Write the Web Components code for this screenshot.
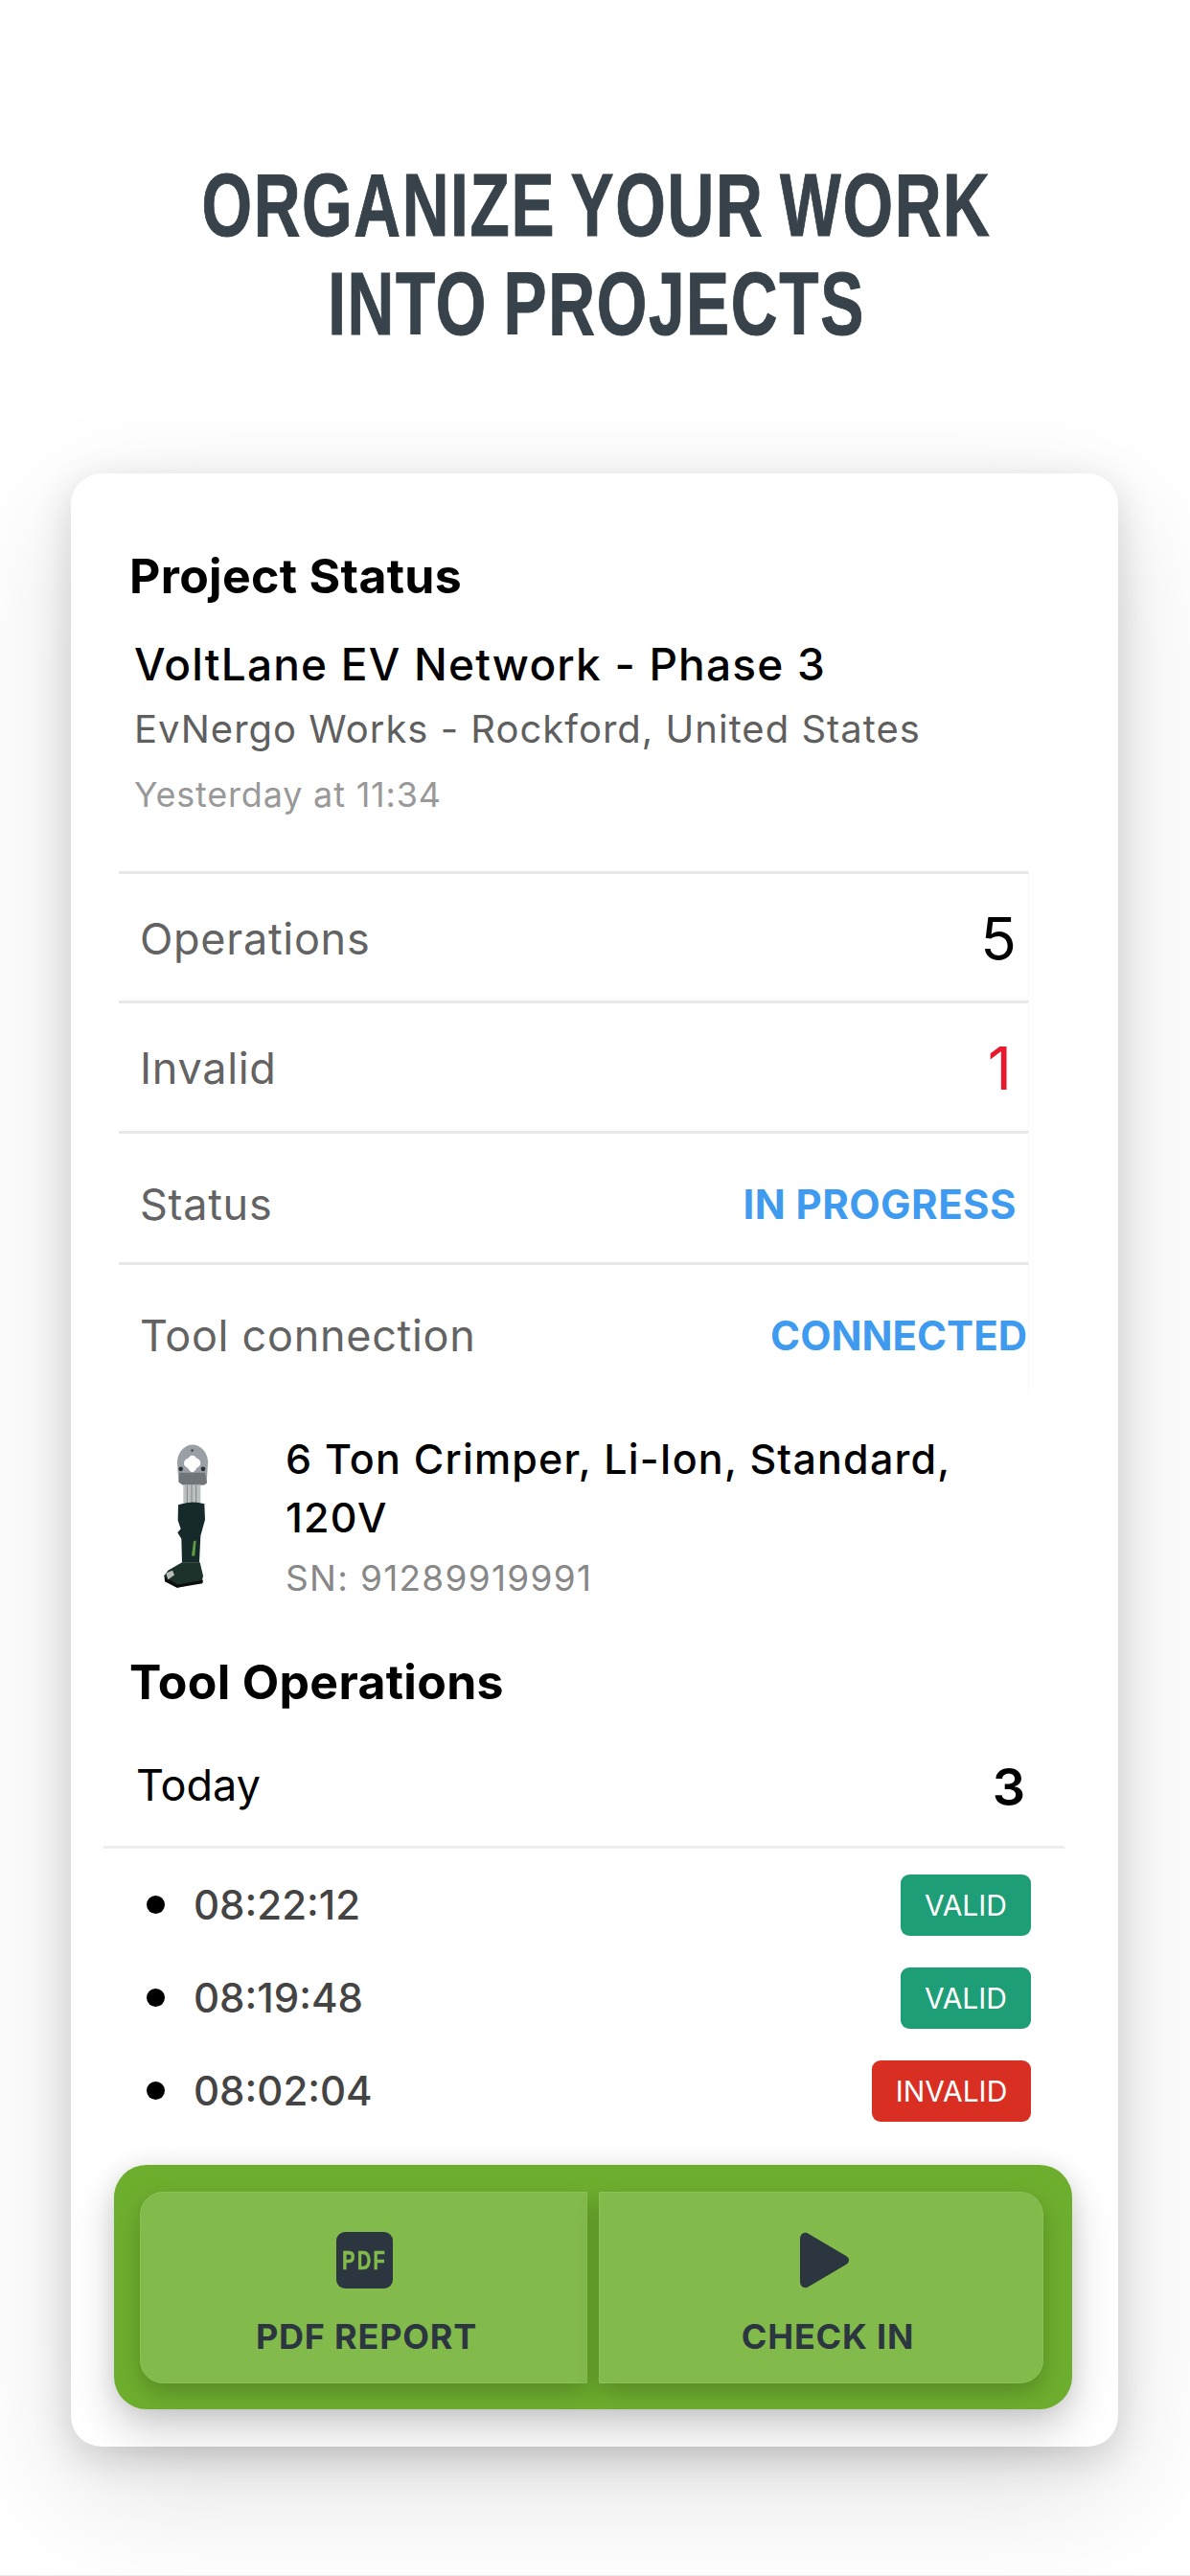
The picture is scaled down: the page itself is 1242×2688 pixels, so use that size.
<!DOCTYPE html>
<html><head><meta charset="utf-8"><title>Projects</title>
<style>
html,body{margin:0;padding:0;background:#fff}
body{width:1242px;height:2688px;overflow:hidden;font-family:Inter,"Liberation Sans",sans-serif;box-shadow:inset 0 -1px #ebebeb}
</style></head><body>
<promo-title><span>ORGANIZE YOUR WORK</span><span>INTO PROJECTS</span></promo-title>
<project-card>
  <section-head>Project Status</section-head>
  <project-summary name="VoltLane EV Network - Phase 3" site="EvNergo Works - Rockford, United States" time="Yesterday at 11:34"></project-summary>
  <stat-table>
    <stat-row h="135" shift="4" rule><span slot="label">Operations</span><span slot="value" class="num">5</span></stat-row>
    <stat-row h="136" shift="2" rule><span slot="label">Invalid</span><span slot="value" class="num red">1</span></stat-row>
    <stat-row h="137" shift="14" rule><span slot="label">Status</span><span slot="value" class="blue">IN PROGRESS</span></stat-row>
    <stat-row h="137" shift="14" wide><span slot="label">Tool connection</span><span slot="value" class="blue tight">CONNECTED</span></stat-row>
  </stat-table>
  <tool-item name="6 Ton Crimper, Li-Ion, Standard, 120V" sn="SN: 91289919991"></tool-item>
  <section-head style="margin-top:56px">Tool Operations</section-head>
  <day-head label="Today" count="3"></day-head>
  <op-list>
    <op-row time="08:22:12" state="VALID"></op-row>
    <op-row time="08:19:48" state="VALID"></op-row>
    <op-row time="08:02:04" state="INVALID" bad></op-row>
  </op-list>
  <action-panel>
    <action-btn label="PDF REPORT" icon="pdf" style="width:467px"></action-btn>
    <action-btn label="CHECK IN" icon="play" style="width:464px"></action-btn>
  </action-panel>
</project-card>
<script>
const def=(name,css,html)=>customElements.define(name,class extends HTMLElement{
  constructor(){super();this.attachShadow({mode:'open'});}
  connectedCallback(){
    const a=n=>this.getAttribute(n)||'';
    this.shadowRoot.innerHTML='<style>'+css+'</style>'+(typeof html==='function'?html(a,this):html);
  }
});
def('promo-title',`:host{display:block;padding:163px 0 0 3px;height:331px;width:1239px;text-align:center;
  font:700 93px/103px "Liberation Sans",sans-serif;color:#37424a;letter-spacing:2.2px;word-spacing:-5px;-webkit-text-stroke:1px #37424a}
  ::slotted(span){display:block;transform:scaleX(.727);transform-origin:50% 50%;white-space:nowrap}`,'<slot></slot>');
def('project-card',`:host{display:block;width:1093px;height:2059px;margin-left:74px;box-sizing:border-box;padding-top:77px;background:#fff;border-radius:32px;
  box-shadow:0 44px 130px rgba(0,0,0,.13),0 12px 40px rgba(0,0,0,.15)}`,'<slot></slot>');
def('section-head',`:host{display:block;height:60px;margin-left:61px;font:700 50px/60px Inter,sans-serif;color:#000;letter-spacing:.3px}`,'<slot></slot>');
def('project-summary',`:host{display:block;margin:34px 0 0 66px}
  div{white-space:nowrap}
  .n{font:500 46px/56px Inter,sans-serif;color:#000;height:56px;letter-spacing:1.2px}
  .s{font:400 40px/50px Inter,sans-serif;color:#5f5f5f;margin-top:15px;height:50px;letter-spacing:1px}
  .t{font:400 36px/44px Inter,sans-serif;color:#999;margin-top:21px;height:44px;letter-spacing:.8px}`,
  a=>`<div class="n">${a('name')}</div><div class="s">${a('site')}</div><div class="t">${a('time')}</div>`);
def('stat-table',`:host{display:block;width:950px;margin:58px 0 0 50px}`,'<slot></slot>');
def('stat-row',`:host{display:flex;box-sizing:border-box;align-items:center;justify-content:space-between;padding:0 12px 0 22px;border-top:3px solid #e8e8e8;border-right:1px solid #f7f7f7;font:400 45px/56px Inter,sans-serif;color:#636363;letter-spacing:.7px}
  :host([wide]){padding-right:1px}
  ::slotted(.num){font:400 62px/64px Inter,sans-serif;color:#000;letter-spacing:0}
  ::slotted(.red){color:#e8192c;padding-right:5px}
  ::slotted(.blue){font:700 42px/52px Inter,sans-serif;color:#3f9bef;letter-spacing:.45px}
  ::slotted(.tight){letter-spacing:0}`,
  (a,el)=>{el.style.height=a('h')+'px';el.style.paddingTop=a('shift')+'px';return '<slot name="label"></slot><slot name="value"></slot>'});
def('tool-item',`:host{display:flex;margin:38px 0 0 96px}
  svg{flex:none;width:50px;height:152px;margin-top:14px;margin-right:78px}
  .n{font:500 43px/61px Inter,sans-serif;color:#000;width:740px;letter-spacing:1.2px}
  .s{font:400 37px/44px Inter,sans-serif;color:#888;margin-top:11px;letter-spacing:1.3px}`,
  a=>`<svg viewBox="150 80 150 455" aria-hidden="true">
  <defs><filter id="b"><feGaussianBlur stdDeviation="1.4"/></filter></defs>
  <g filter="url(#b)">
  <path d="M195 140a48 56 0 1 1 96 0l-4 62-10 8h-64l-14-10z" fill="#9a9fa6"/>
  <path d="M202 172h80l6 32-8 6h-68l-12-8z" fill="#70757a"/>
  <path d="M242 118c7 0 10 4 13 8 8 2 13 8 13 16 0 9-7 13-12 15-3 6-8 13-14 13s-10-7-14-13c-6-2-12-6-12-15 0-8 6-14 14-16 3-4 6-8 12-8z" fill="#fff"/>
  <circle cx="206" cy="160" r="7" fill="#2c3034"/><circle cx="276" cy="160" r="7" fill="#2c3034"/><circle cx="242" cy="102" r="4" fill="#40464a"/>
  <rect x="214" y="210" width="54" height="56" fill="#bcc0c2"/>
  <path d="M226 210v56M240 210v56M254 210v56" stroke="#7d8386" stroke-width="3"/>
  <path d="M198 272q42-14 82-3l2 50-14 50-4 84h-54l-2-74-12-20 10-12-9-26z" fill="#15292a"/>
  <path d="M240 432l6-46 8-2-4 48z" fill="#5f9c45"/>
  <path d="M166 478l44-26h56l10 42-4 20-76 18-40-22-2-16z" fill="#1c3329"/>
  <path d="M156 498l40 24 80-14-2 10-80 14-38-20z" fill="#090b0a"/>
  <path d="M160 486l20-8 6 14-20 14z" fill="#b9bdba"/>
  </g></svg>
  <div><div class="n">${a('name')}</div><div class="s">${a('sn')}</div></div>`);
def('day-head',`:host{display:flex;box-sizing:border-box;height:143px;margin:1px 0 0 34px;width:1003px;justify-content:space-between;align-items:center;padding:14px 41px 0 34px;border-bottom:3px solid #eee}
  .l{font:400 45px/56px Inter,sans-serif;color:#000}
  .c{font:600 54px/64px Inter,sans-serif;color:#000;padding-top:4px}`,
  a=>`<span class="l">${a('label')}</span><span class="c">${a('count')}</span>`);
def('op-list',`:host{display:flex;flex-direction:column;gap:33px;margin:27px 91px 0 79px}`,'<slot></slot>');
def('op-row',`:host{display:flex;height:64px;align-items:center}
  i{display:block;width:19px;height:19px;border-radius:50%;background:#000;margin-right:30px;margin-top:-2px}
  .t{font:500 42px/52px Inter,sans-serif;color:#444;flex:1}
  .b{height:64px;border-radius:9px;background:#1e9e76;color:#fff;font:400 30px/64px Inter,sans-serif;box-sizing:border-box;width:136px;text-align:center}
  .b.x{background:#d92e22;width:166px}`,
  (a,el)=>`<i></i><span class="t">${a('time')}</span><span class="b${el.hasAttribute('bad')?' x':''}">${a('state')}</span>`);
def('action-panel',`:host{display:flex;gap:12px;width:1000px;height:255px;box-sizing:border-box;margin:45px 0 0 45px;padding:28px 30px 27px 27px;background:#6eae2e;border-radius:34px;
  box-shadow:0 20px 44px rgba(0,0,0,.2),0 0 22px rgba(0,0,0,.07)}`,'<slot></slot>');
def('action-btn',`:host{display:flex;flex-direction:column;align-items:center;box-sizing:border-box;height:200px;padding-top:41px;background:#83ba4c;border:1px solid #8cc058;box-shadow:0 10px 24px rgba(0,0,0,.2);color:#2c3640}
  :host(:first-child){border-radius:24px 0 0 24px}
  :host(:last-child){border-radius:0 24px 24px 0}
  .ico{height:59px;display:flex;align-items:center;justify-content:center}
  .pdf{width:59px;height:59px;border-radius:9px;background:#2c3640;color:#83ba4c;display:flex;align-items:center;justify-content:center;font:700 28px/28px "Liberation Sans",sans-serif;letter-spacing:3px;-webkit-text-stroke:.5px #83ba4c}
  .pdf b{display:block;font-weight:700;transform:scaleX(.72)}
  svg{display:block;width:54px;height:59px}
  .l{font:700 36px/44px Inter,sans-serif;letter-spacing:.8px;margin-top:28px;white-space:nowrap}
  :host(:first-child) .l{margin-left:6px}
  :host(:first-child) .ico{margin-left:2px}
  :host(:last-child) .l{margin-left:14px}
  :host(:last-child) .ico{margin-left:8px}`,
  a=>`<div class="ico">${a('icon')==='pdf'?'<span class="pdf"><b>PDF</b></span>':'<svg viewBox="0 0 54 59"><path d="M1 7c0-5 5-8 9-5l39 23c4 2 4 7 0 9L10 57c-4 3-9 0-9-5z" fill="#2c3640"/></svg>'}</div><div class="l">${a('label')}</div>`);
</script>
</body></html>
